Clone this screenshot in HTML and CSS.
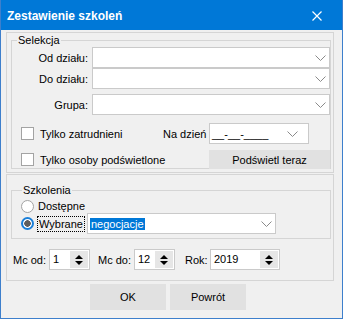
FILE: index.html
```html
<!DOCTYPE html>
<html lang="pl">
<head>
    <meta charset="UTF-8">
    <meta name="viewport" content="width=device-width, initial-scale=1.0">
    <title>Zestawienie szkoleń</title>
    <link rel="stylesheet" href="styles.css">
</head>
<body>
    <div class="window">
        <div class="titlebar">
            <span class="title">Zestawienie szkoleń</span>
            <svg class="close" width="10" height="10" viewBox="0 0 10 10">
                <path d="M0.5 0.5L9.5 9.5M9.5 0.5L0.5 9.5" stroke="#fff" stroke-width="1.2" fill="none"/>
            </svg>
        </div>

        <div class="client">
            <div class="panel panel-sel">
                <div class="group group-sel">
                    <span class="legend">Selekcja</span>

                    <div class="field">
                        <span class="field-label">Od działu:</span>
                        <div class="combo combo-wide">
                            <span class="combo-text"></span>
                            <svg class="chev" width="11" height="6" viewBox="0 0 11 6"><path d="M0.5 0.5L5.5 5.5L10.5 0.5" stroke="#8a8a8a" fill="none"/></svg>
                        </div>
                    </div>
                    <div class="field">
                        <span class="field-label">Do działu:</span>
                        <div class="combo combo-wide">
                            <span class="combo-text"></span>
                            <svg class="chev" width="11" height="6" viewBox="0 0 11 6"><path d="M0.5 0.5L5.5 5.5L10.5 0.5" stroke="#8a8a8a" fill="none"/></svg>
                        </div>
                    </div>
                    <div class="field field-gap">
                        <span class="field-label">Grupa:</span>
                        <div class="combo combo-wide">
                            <span class="combo-text"></span>
                            <svg class="chev" width="11" height="6" viewBox="0 0 11 6"><path d="M0.5 0.5L5.5 5.5L10.5 0.5" stroke="#8a8a8a" fill="none"/></svg>
                        </div>
                    </div>

                    <div class="opt-row opt-row-1">
                        <div class="check check-1">
                            <span class="box"></span>
                            <span>Tylko zatrudnieni</span>
                        </div>
                        <span class="date-label">Na dzień</span>
                        <div class="combo combo-date">
                            <span class="combo-text">__-__-____</span>
                            <svg class="chev chev-date" width="11" height="6" viewBox="0 0 11 6"><path d="M0.5 0.5L5.5 5.5L10.5 0.5" stroke="#8a8a8a" fill="none"/></svg>
                        </div>
                    </div>
                    <div class="opt-row opt-row-2">
                        <div class="check check-2">
                            <span class="box"></span>
                            <span>Tylko osoby podświetlone</span>
                        </div>
                        <button class="btn btn-highlight">Podświetl teraz</button>
                    </div>
                </div>
            </div>

            <div class="panel panel-trn">
                <div class="group group-trn">
                    <span class="legend legend-trn">Szkolenia</span>
                    <div class="radio-row">
                        <span class="radio"></span>
                        <span class="radio-text">Dostępne</span>
                    </div>
                    <div class="radio-row radio-row-2">
                        <span class="radio radio-on"></span>
                        <span class="radio-text focus">Wybrane</span>
                        <div class="combo combo-trn">
                            <span class="combo-text"><span class="selected">negocjacje</span></span>
                            <svg class="chev" width="11" height="6" viewBox="0 0 11 6"><path d="M0.5 0.5L5.5 5.5L10.5 0.5" stroke="#8a8a8a" fill="none"/></svg>
                        </div>
                    </div>
                </div>

                <div class="spin-row">
                    <span class="spin-label spin-label-1">Mc od:</span>
                    <div class="spin spin-short">
                        <span class="spin-value">1</span>
                        <span class="spin-btns"><i class="arrow-up"></i><i class="arrow-down"></i></span>
                    </div>
                    <span class="spin-label spin-label-2">Mc do:</span>
                    <div class="spin spin-short">
                        <span class="spin-value">12</span>
                        <span class="spin-btns"><i class="arrow-up"></i><i class="arrow-down"></i></span>
                    </div>
                    <span class="spin-label spin-label-3">Rok:</span>
                    <div class="spin spin-year">
                        <span class="spin-value">2019</span>
                        <span class="spin-btns"><i class="arrow-up"></i><i class="arrow-down"></i></span>
                    </div>
                </div>
            </div>

            <div class="buttons">
                <button class="btn btn-dialog">OK</button>
                <button class="btn btn-dialog">Powrót</button>
            </div>
        </div>
    </div>
</body>
</html>
```

FILE: styles.css
```css
body {
    margin: 0;
    font-family: "Liberation Sans", Arial, sans-serif;
    font-size: 11px;
    color: #000;
    white-space: nowrap;
}

.window {
    width: 341px;
    height: 318px;
    border: 1px solid #3d7fcc;
    border-top: none;
    background: #f0f0f0;
}

.titlebar {
    height: 30px;
    background: #0078d7;
    color: #fff;
    display: flex;
    align-items: center;
    justify-content: space-between;
    padding: 2px 20px 0 6px;
    box-sizing: border-box;
}

.title {
    font-weight: bold;
    font-size: 12px;
}

.client {
    padding: 2px 8px 0 5px;
}

.panel {
    border: 1px solid #d5d5d5;
    box-sizing: border-box;
}

.panel-sel {
    height: 141px;
    padding: 7px 2px 0 4px;
}

.panel-trn {
    height: 107px;
    margin-top: 1px;
    padding: 15px 2px 0 4px;
}

.group {
    position: relative;
    border: 1px solid #d5d5d5;
    box-sizing: border-box;
}

.legend {
    position: absolute;
    top: -7px;
    left: 5px;
    padding: 0 1px;
    line-height: 13px;
    background: #f0f0f0;
}

.legend-trn {
    left: 10px;
}

.group-sel {
    height: 129px;
    padding-top: 6px;
}

.field {
    display: flex;
    align-items: center;
}

.field-gap {
    margin-top: 5px;
}

.field-label {
    width: 80px;
    padding-right: 4px;
    box-sizing: border-box;
    text-align: right;
}

.combo {
    height: 21px;
    border: 1px solid #cacaca;
    background: #fff;
    box-sizing: border-box;
    display: flex;
    align-items: center;
    justify-content: space-between;
    padding-left: 2px;
    flex-shrink: 0;
}

.combo-wide {
    width: 238px;
}

.combo-date {
    width: 100px;
}

.combo-trn {
    width: 189px;
    margin-left: 2px;
}

.chev {
    margin-right: 3px;
}

.chev-date {
    margin-right: 10px;
}

.opt-row {
    display: flex;
    align-items: center;
}

.opt-row-1 {
    margin-top: 8px;
}

.opt-row-2 {
    margin-top: 6px;
}

.check {
    display: flex;
    align-items: center;
    gap: 6px;
    padding-left: 9px;
    box-sizing: border-box;
    flex-shrink: 0;
}

.check-1 {
    width: 151px;
}

.check-2 {
    width: 197px;
}

.box {
    width: 13px;
    height: 13px;
    border: 1px solid #a3a3a3;
    background: #fff;
    box-sizing: border-box;
}

.date-label {
    width: 46px;
    flex-shrink: 0;
}

.btn {
    border: none;
    background: #e1e1e1;
    font-family: "Liberation Sans", Arial, sans-serif;
    font-size: 11px;
    color: #000;
    padding: 0;
}

.btn-highlight {
    width: 121px;
    height: 19px;
}

.group-trn {
    height: 49px;
    padding-top: 8px;
}

.radio-row {
    display: flex;
    align-items: center;
    height: 14px;
    padding-left: 9px;
}

.radio-row-2 {
    height: 21px;
}

.radio {
    width: 13px;
    height: 13px;
    border: 1px solid #a3a3a3;
    border-radius: 50%;
    background: #fff;
    box-sizing: border-box;
    flex-shrink: 0;
}

.radio-on {
    border: 2px solid #1a7fd9;
    background: radial-gradient(circle, #5e5e5e 0 3px, #fff 3.5px);
}

.radio-text {
    margin-left: 4px;
}

.focus {
    margin-left: 3px;
    padding: 0 1px;
    line-height: 14px;
    border: 1px dotted #000;
}

.selected {
    background: #0078d7;
    color: #fff;
    padding: 0 1px;
}

.spin-row {
    display: flex;
    align-items: center;
    margin-top: 10px;
    padding-left: 2px;
}

.spin-label {
    margin-right: 4px;
    flex-shrink: 0;
}

.spin-label-1 {
    width: 32px;
}

.spin-label-2 {
    width: 32px;
    margin-left: 8px;
}

.spin-label-3 {
    width: 21px;
    margin-left: 10px;
}

.spin {
    display: flex;
    height: 21px;
    border: 1px solid #cacaca;
    background: #fff;
    box-sizing: border-box;
    flex-shrink: 0;
}

.spin-short {
    width: 41px;
}

.spin-year {
    width: 70px;
}

.spin-value {
    flex: 1;
    padding-left: 3px;
    line-height: 19px;
}

.spin-btns {
    width: 18px;
    margin: 1px 1px 1px 0;
    background: #e6e6e6;
    display: flex;
    flex-direction: column;
    align-items: center;
    justify-content: center;
    gap: 2px;
}

.arrow-up,
.arrow-down {
    width: 0;
    height: 0;
    border-left: 4px solid transparent;
    border-right: 4px solid transparent;
}

.arrow-up {
    border-bottom: 4px solid #000;
}

.arrow-down {
    border-top: 4px solid #000;
}

.buttons {
    display: flex;
    gap: 4px;
    margin-top: 3px;
    padding-left: 84px;
}

.btn-dialog {
    width: 76px;
    height: 26px;
}
```
